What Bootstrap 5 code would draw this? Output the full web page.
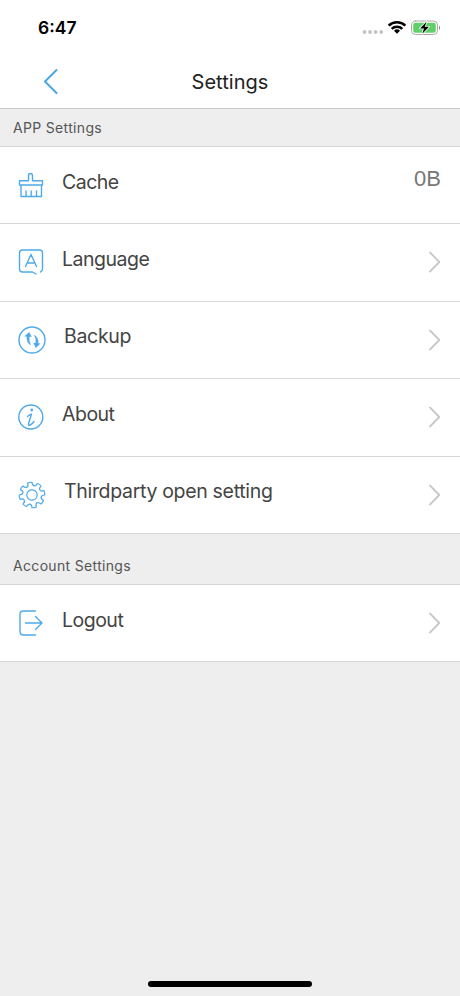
<!DOCTYPE html>
<html lang="en">
<head>
<meta charset="utf-8">
<meta name="viewport" content="width=device-width, initial-scale=1">
<title>Settings</title>
<link href="https://cdn.jsdelivr.net/npm/bootstrap@5.3.0/dist/css/bootstrap.min.css" rel="stylesheet">
<style>
body{font-family:Inter,"Liberation Sans",sans-serif;background:#eee;color:#444;height:996px;overflow:hidden}
svg{display:block;flex:none;fill:none;stroke-linecap:round;stroke-linejoin:round}
.status-bar{height:56px;padding:0 19px 0 38px;color:#000}
.clock{font-size:17.5px;font-weight:600;line-height:56px;letter-spacing:0}
.title-bar{height:53px;border-bottom:1px solid #c8c8c8;color:#222}
.title-bar h1{font-size:20px;line-height:52px;font-weight:400;letter-spacing:.05px}
.back{left:43px;top:12px}
.section-label{font-size:14px;line-height:37px;height:38px;padding-left:13px;border-bottom:1px solid #d4d4d4;color:#555;letter-spacing:.33px}
.section-label.second{height:51px;line-height:63px}
.setting{height:77.5px;border:0;border-bottom:1px solid #d8d8d8;border-radius:0;padding:0 19px 0 16px;color:#444;background:#fff}
.setting:first-child{height:77px}
.setting .name{font-size:19.5px;line-height:24px;margin-left:14px;margin-bottom:7px;letter-spacing:-.5px}
.setting .name.inset{margin-left:16px;letter-spacing:-.32px}
.size-value{font-size:22px;line-height:26px;margin-bottom:12px;color:#777;font-family:"Liberation Sans",sans-serif}
.line-icon{stroke:#4eaae8;stroke-width:1.4}
.home-bar{width:164px;height:6px;border-radius:3px;background:#000;bottom:9px}
</style>
</head>
<body>
<header class="bg-white">
<div class="status-bar d-flex align-items-center justify-content-between">
<span class="clock">6:47</span>
<svg width="80" height="20" viewBox="0 0 80 20"><g fill="#c4c4c4"><circle cx="3.500" cy="14" r="1.900"/><circle cx="9" cy="14" r="1.900"/><circle cx="14.600" cy="14" r="1.900"/><circle cx="20.200" cy="14" r="1.900"/></g>
<g stroke="#000" stroke-width="2.500" stroke-linecap="butt"><path d="M27.700 7.700a12 12 0 0 1 16.600 0M30.700 10.900a7.700 7.700 0 0 1 10.600 0"/></g><path fill="#000" d="M33 12.700a4.500 4.500 0 0 1 6 0l-3 3z"/>
<rect x="50.500" y="3" width="26" height="13.500" rx="4" stroke="#aaa"/><rect x="52.200" y="4.700" width="22.600" height="10.100" rx="2.300" fill="#5fd068"/><path d="M78 7.800v4c1.500-.5 1.500-3.500 0-4z" fill="#888"/><path d="M65.500 3.800 59 10.400h4L61.300 15.800l6.700-7h-4.200z" fill="#000" stroke="#fff" stroke-width="1.600" paint-order="stroke"/></svg>
</div>
<div class="title-bar position-relative text-center">
<svg class="back position-absolute" width="16" height="28" viewBox="0 0 16 28" stroke="#4aa5e3" stroke-width="2"><path d="M13.500 2 2 13.500 13.500 25"/></svg>
<h1 class="m-0">Settings</h1>
</div>
</header>
<main>
<h2 class="section-label m-0 fw-normal">APP Settings</h2>
<div class="list-group rounded-0">
<div class="setting list-group-item d-flex align-items-center">
<svg class="line-icon" width="32" height="32" viewBox="0 0 32 32"><path d="M3.500 16v-4.200h9V7q0-2.500 2-2.500t2 2.500v4.800h10V16zM5 16v11.500h20.500V16M10 22v5.500M15.200 22v5.500M20.500 22v5.500"/></svg>
<span class="name">Cache</span><span class="size-value ms-auto">0B</span></div>
<div class="setting list-group-item d-flex align-items-center">
<svg class="line-icon" width="32" height="32" viewBox="0 0 32 32"><path d="M24.500 26q2-.8 2-3V7q0-3-3-3H6.500Q3.500 4 3.500 7v16q0 3 3 3h10l3.500 2M9.500 20.500l5.500-12 5.500 12M11.500 17h7"/></svg>
<span class="name">Language</span><svg class="ms-auto" width="14" height="24" viewBox="0 0 14 24" stroke="#c8c8c8" stroke-width="1.800"><path d="M3 2.500 12.300 12 3 21.500"/></svg></div>
<div class="setting list-group-item d-flex align-items-center">
<svg class="line-icon" width="32" height="32" viewBox="0 0 32 32"><circle cx="16" cy="16" r="13"/><path fill="#4eaae8" stroke="none" d="M8.300 12.500 13.200 8l2.500 5-2.300-.3q-.6 4.800 1.600 8.600-5-3-4.300-8.900zM24.700 19.300l-4.900 4.700-2.500-5.200 2.300.3q.6-4.800-1.600-8.600 5 3 4.300 8.900z"/></svg>
<span class="name inset">Backup</span><svg class="ms-auto" width="14" height="24" viewBox="0 0 14 24" stroke="#c8c8c8" stroke-width="1.800"><path d="M3 2.500 12.300 12 3 21.500"/></svg></div>
<div class="setting list-group-item d-flex align-items-center">
<svg class="line-icon" width="32" height="32" viewBox="0 0 32 32"><circle cx="14.800" cy="16" r="12"/><circle cx="15.800" cy="9" r=".7" fill="#4eaae8"/><path d="M11.500 15.500q2-2 4-2.200L12.700 22q-.8 3 1.300 2 2.300-1 4-3.500"/></svg>
<span class="name">About</span><svg class="ms-auto" width="14" height="24" viewBox="0 0 14 24" stroke="#c8c8c8" stroke-width="1.800"><path d="M3 2.500 12.300 12 3 21.500"/></svg></div>
<div class="setting list-group-item d-flex align-items-center">
<svg class="line-icon" width="32" height="32" viewBox="0 0 32 32"><g transform="translate(16 16) rotate(-10)" stroke-width="1.200"><circle r="5.200"/><path d="M-2.200-12.500Q0-13.200 2.200-12.500C1.700-8.300 4.700-7 7.280-10.390Q9.400-9.400 10.390-7.280C7.070-4.670 8.270-1.630 12.500-2.200Q13.200 0 12.500 2.200C8.300 1.700 7 4.700 10.390 7.280Q9.400 9.400 7.280 10.390C4.670 7.070 1.630 8.270 2.200 12.500Q0 13.200-2.200 12.500C-1.700 8.300-4.700 7-7.280 10.390Q-9.400 9.400-10.390 7.280C-7.070 4.670-8.270 1.630-12.500 2.200Q-13.200 0-12.500-2.200C-8.300-1.700-7-4.700-10.390-7.280Q-9.400-9.400-7.280-10.390C-4.670-7.070-1.630-8.270-2.200-12.500z"/></g></svg>
<span class="name inset">Thirdparty open setting</span><svg class="ms-auto" width="14" height="24" viewBox="0 0 14 24" stroke="#c8c8c8" stroke-width="1.800"><path d="M3 2.500 12.300 12 3 21.500"/></svg></div>
</div>
<h2 class="section-label second m-0 fw-normal">Account Settings</h2>
<div class="list-group rounded-0">
<div class="setting list-group-item d-flex align-items-center">
<svg class="line-icon" width="32" height="32" viewBox="0 0 32 32"><path d="M19.500 4H7.500Q4 4 4 7.500v17Q4 28 7.500 28h12M9.500 16H26M19.500 9.500 26 16l-6.500 6.500"/></svg>
<span class="name">Logout</span><svg class="ms-auto" width="14" height="24" viewBox="0 0 14 24" stroke="#c8c8c8" stroke-width="1.800"><path d="M3 2.500 12.300 12 3 21.500"/></svg></div>
</div>
</main>
<div class="home-bar position-fixed start-50 translate-middle-x"></div>
<script src="https://cdn.jsdelivr.net/npm/bootstrap@5.3.0/dist/js/bootstrap.bundle.min.js"></script>
</body>
</html>
